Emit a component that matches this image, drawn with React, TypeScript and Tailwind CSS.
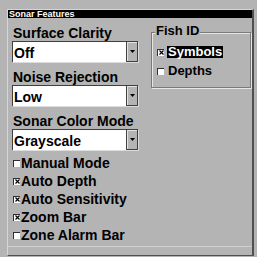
import React from "react";

function Box({ checked }: { checked: boolean }) {
  return (
    <div className="w-[7px] h-[7px] bg-white border-l border-t border-[#303030] flex items-center justify-center shrink-0">
      {checked && (
        <svg width="5" height="5" viewBox="0 0 5 5" className="block">
          <path d="M0.5 0.5 L4.5 4.5 M4.5 0.5 L0.5 4.5" stroke="#000" strokeWidth="1.2" />
        </svg>
      )}
    </div>
  );
}

function Dropdown({ value }: { value: string }) {
  return (
    <div className="h-[21px] w-[126px] flex border-t border-l border-[#404040] bg-white shadow-[1px_1px_0_#dcdcdc]">
      <div className="flex-1 text-[14px] font-bold leading-[20px] pt-[1px] pl-[1px] overflow-hidden text-black">
        {value}
      </div>
      <div className="w-[12px] h-full bg-[#b4b4b4] border-l border-r border-b border-[#404040] shadow-[inset_1px_1px_0_#e4e4e4] flex items-center justify-center">
        <svg width="5" height="3" viewBox="0 0 5 3" className="block">
          <path d="M0 0 H5 L2.5 3 Z" fill="#000" />
        </svg>
      </div>
    </div>
  );
}

function Label({ text }: { text: string }) {
  return (
    <div className="h-[16px] text-[14px] font-bold leading-[16px] pl-[1px] whitespace-nowrap text-black">
      {text}
    </div>
  );
}

function CheckRow({ label, checked }: { label: string; checked: boolean }) {
  return (
    <div className="h-[18px] flex items-center gap-[1px] pl-[1px]">
      <Box checked={checked} />
      <span className="text-[14px] font-bold leading-[16px] whitespace-nowrap text-black">{label}</span>
    </div>
  );
}

export default function App() {
  return (
    <div className="w-[257px] h-[257px] bg-[#b4b4b4] pt-[9px] pl-[7px] overflow-hidden font-['Liberation_Sans',Arial,sans-serif]">
      <div className="w-[247px] h-[247px] border-l border-t border-[#d6d6d6] border-r-2 border-b border-r-[#505050] border-b-[#505050] flex flex-col">
        <div className="h-[8px] bg-black text-white text-[9px] font-bold leading-[8px] pl-[1px] whitespace-nowrap overflow-hidden">
          Sonar Features
        </div>
        <div className="flex flex-row pl-[4px] pt-[7px] flex-1">
          <div className="w-[126px] flex flex-col">
            <Label text="Surface Clarity" />
            <Dropdown value="Off" />
            <div className="mt-[7px]">
              <Label text="Noise Rejection" />
            </div>
            <Dropdown value="Low" />
            <div className="mt-[7px]">
              <Label text="Sonar Color Mode" />
            </div>
            <Dropdown value="Grayscale" />
            <div className="mt-[4px] flex flex-col">
              <CheckRow label="Manual Mode" checked={false} />
              <CheckRow label="Auto Depth" checked={true} />
              <CheckRow label="Auto Sensitivity" checked={true} />
              <CheckRow label="Zoom Bar" checked={true} />
              <CheckRow label="Zone Alarm Bar" checked={false} />
            </div>
          </div>
          <div className="ml-[13px] w-[100px] pt-[7px]">
            <div className="relative h-[56px] border border-[#7a7a7a] shadow-[inset_1px_1px_0_#e6e6e6,1px_1px_0_#e6e6e6]">
              <div className="absolute left-[3px] top-[-10px] px-[1px] bg-[#b4b4b4] text-[13px] font-bold leading-[15px] text-black">
                Fish ID
              </div>
              <div className="pt-[13px] pl-[5px] flex flex-col">
                <div className="h-[12px] flex items-center gap-[3px]">
                  <Box checked={true} />
                  <span className="bg-black text-white px-[1px] text-[13px] font-bold leading-[12px] h-[12px] whitespace-nowrap">
                    Symbols
                  </span>
                </div>
                <div className="mt-[7px] h-[12px] flex items-center gap-[3px]">
                  <Box checked={false} />
                  <span className="px-[1px] text-[13px] font-bold leading-[12px] h-[12px] whitespace-nowrap text-black">
                    Depths
                  </span>
                </div>
              </div>
            </div>
          </div>
        </div>
        <div className="h-px bg-[#d0d0d0] mb-[8px]" />
      </div>
    </div>
  );
}
